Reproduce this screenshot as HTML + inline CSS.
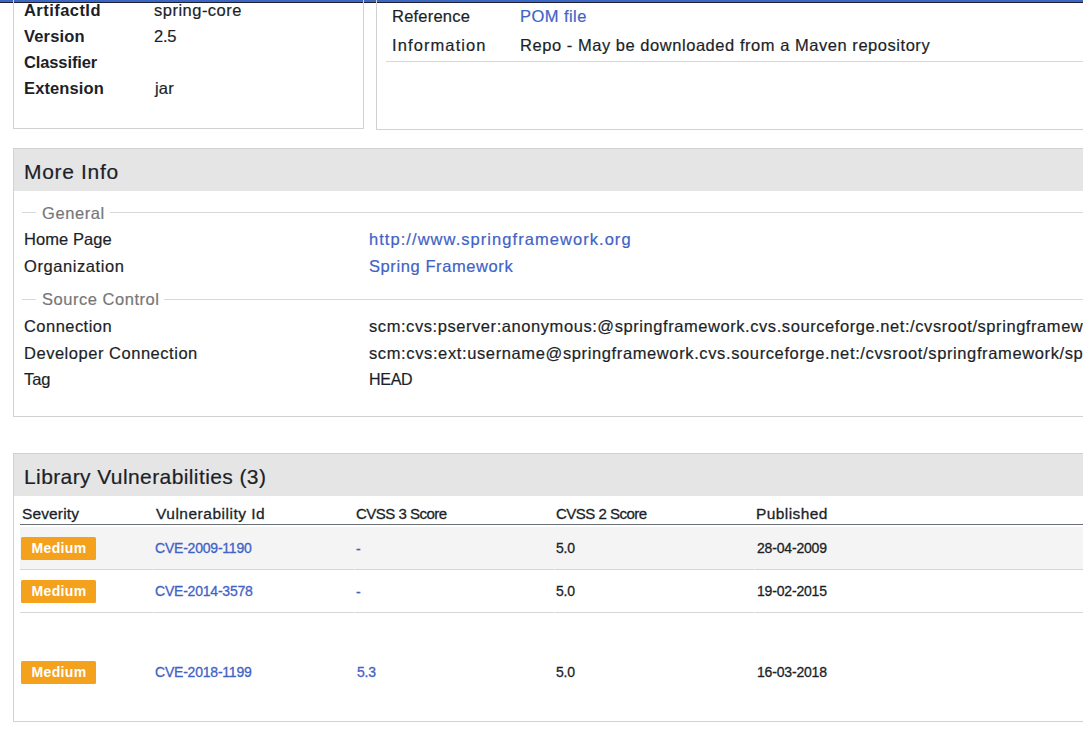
<!DOCTYPE html>
<html><head><meta charset="utf-8">
<style>
html,body{margin:0;padding:0;background:#fff;width:1083px;height:733px;overflow:hidden;position:relative}
body{font-family:"Liberation Sans",sans-serif;color:#1c1f29;}
.a{position:absolute;white-space:nowrap;line-height:20px;font-size:16.5px;-webkit-text-stroke:0.2px #1c1f29}
.b{font-weight:bold;-webkit-text-stroke:0}
.lnk{color:#4262c6;-webkit-text-stroke:0.2px #4262c6}
.box{position:absolute;border:1px solid #d2d2d2;box-sizing:border-box}
.hline{position:absolute;height:1px;background:#d8d8d8}
.hdr{position:absolute;background:#e5e5e5}
.h20{font-size:21px}
.h15{font-size:15.5px;-webkit-text-stroke:0.3px #1c1f29}
.c14{font-size:14px;-webkit-text-stroke:0.3px #1c1f29}
.c14.lnk{-webkit-text-stroke:0.3px #4262c6}
.badge{position:absolute;left:21px;width:75px;height:23px;background:#f4a21e;border-radius:1.5px;color:#fff;font-weight:bold;font-size:14px;line-height:23px;text-align:center;letter-spacing:0.35px;box-sizing:border-box;padding-left:1px}
.gray{color:#777;-webkit-text-stroke:0.2px #777}
</style></head>
<body>
<div style="position:absolute;left:0;top:0;width:1083px;height:2px;background:#3b66c4"></div>
<div style="position:absolute;left:0;top:2px;width:1083px;height:1px;background:#1c2030"></div>
<div class="box" style="left:13px;top:-20px;width:351px;height:149px"></div>
<div id="artifact" class="a b" style="left:24px;top:0px;letter-spacing:0.451px">ArtifactId</div>
<div id="version" class="a b" style="left:24px;top:26px;letter-spacing:0.167px">Version</div>
<div id="classifier" class="a b" style="left:24px;top:52px;letter-spacing:-0.120px">Classifier</div>
<div id="extension" class="a b" style="left:24px;top:78px;letter-spacing:0.125px">Extension</div>
<div id="springcore" class="a" style="left:154px;top:0px;letter-spacing:0.490px">spring-core</div>
<div id="v25" class="a" style="left:154px;top:26px;letter-spacing:-0.300px">2.5</div>
<div id="jar" class="a" style="left:155px;top:78px;letter-spacing:0.200px">jar</div>
<div class="box" style="left:376px;top:-20px;width:800px;height:150px"></div>
<div id="reference" class="a" style="left:392px;top:6px;letter-spacing:0.220px">Reference</div>
<div id="pom" class="a lnk" style="left:520px;top:6px;letter-spacing:0.441px">POM file</div>
<div id="information" class="a" style="left:392px;top:35px;letter-spacing:1.100px">Information</div>
<div id="repo" class="a" style="left:520px;top:35px;letter-spacing:0.540px">Repo - May be downloaded from a Maven repository</div>
<div class="hline" style="left:386px;top:61px;width:700px"></div>
<div class="box" style="left:13px;top:148px;width:1100px;height:269px"></div>
<div class="hdr" style="left:14px;top:149px;width:1100px;height:42px"></div>
<div id="moreinfo" class="a h20" style="left:24px;top:162px;letter-spacing:0.675px">More Info</div>
<div class="hline" style="left:22px;top:212px;width:14px"></div>
<div id="general" class="a gray" style="left:42px;top:203px;letter-spacing:0.583px">General</div>
<div class="hline" style="left:110px;top:212px;width:1000px"></div>
<div id="homepage" class="a" style="left:24px;top:229px;letter-spacing:0.075px">Home Page</div>
<div id="http" class="a lnk" style="left:369px;top:229px;letter-spacing:1.052px">http://www.springframework.org</div>
<div id="organization" class="a" style="left:24px;top:256px;letter-spacing:0.573px">Organization</div>
<div id="springfw" class="a lnk" style="left:369px;top:256px;letter-spacing:0.590px">Spring Framework</div>
<div class="hline" style="left:22px;top:299px;width:14px"></div>
<div id="sourcecontrol" class="a gray" style="left:42px;top:289px;letter-spacing:0.530px">Source Control</div>
<div class="hline" style="left:164px;top:299px;width:1000px"></div>
<div id="connection" class="a" style="left:24px;top:316px;letter-spacing:0.453px">Connection</div>
<div id="scm1" class="a" style="left:369px;top:316px;letter-spacing:0.565px">scm:cvs:pserver:anonymous:@springframework.cvs.sourceforge.net:/cvsroot/springframework/spring</div>
<div id="devconn" class="a" style="left:24px;top:343px;letter-spacing:0.526px">Developer Connection</div>
<div id="scm2" class="a" style="left:369px;top:343px;letter-spacing:0.620px">scm:cvs:ext:username@springframework.cvs.sourceforge.net:/cvsroot/springframework/spring</div>
<div id="tag" class="a" style="left:24px;top:369px;letter-spacing:-0.100px">Tag</div>
<div id="head" class="a" style="left:369px;top:370px;letter-spacing:-0.300px;font-size:16px">HEAD</div>
<div class="box" style="left:13px;top:453px;width:1100px;height:269px"></div>
<div class="hdr" style="left:14px;top:454px;width:1100px;height:42px"></div>
<div id="libvuln" class="a h20" style="left:24px;top:467px;letter-spacing:0.400px">Library Vulnerabilities (3)</div>
<div id="severity" class="a h15" style="left:22px;top:504px;letter-spacing:0.129px">Severity</div>
<div id="vulnid" class="a h15" style="left:156px;top:504px;letter-spacing:0.510px">Vulnerability Id</div>
<div id="cvss3" class="a h15" style="left:356px;top:504px;letter-spacing:-0.500px;font-size:15px">CVSS 3 Score</div>
<div id="cvss2" class="a h15" style="left:556px;top:504px;letter-spacing:-0.500px;font-size:15px">CVSS 2 Score</div>
<div id="published" class="a h15" style="left:756px;top:504px;letter-spacing:0.425px">Published</div>
<div style="position:absolute;left:20px;top:524px;width:1080px;height:1px;background:#6a6e75"></div>
<div style="position:absolute;left:20px;top:527px;width:1080px;height:42px;background:#f4f4f4"></div>
<div class="hline" style="left:20px;top:569px;width:1080px;background:#d6d6d6"></div>
<div class="hline" style="left:20px;top:612px;width:1080px;background:#d6d6d6"></div>
<div style="position:absolute;left:153px;top:569px;width:1px;height:1px;background:#ececec"></div><div style="position:absolute;left:153px;top:612px;width:1px;height:1px;background:#ececec"></div><div style="position:absolute;left:354px;top:569px;width:1px;height:1px;background:#ececec"></div><div style="position:absolute;left:354px;top:612px;width:1px;height:1px;background:#ececec"></div><div style="position:absolute;left:554px;top:569px;width:1px;height:1px;background:#ececec"></div><div style="position:absolute;left:554px;top:612px;width:1px;height:1px;background:#ececec"></div><div style="position:absolute;left:754px;top:569px;width:1px;height:1px;background:#ececec"></div><div style="position:absolute;left:754px;top:612px;width:1px;height:1px;background:#ececec"></div>
<div class="badge" style="top:537px">Medium</div>
<div id="cve1" class="a c14 lnk" style="left:155px;top:538px;letter-spacing:-0.213px">CVE-2009-1190</div>
<div id="dash1" class="a c14 lnk" style="left:356px;top:539px;letter-spacing:0.000px">-</div>
<div id="s2a" class="a c14" style="left:556px;top:538px;letter-spacing:-0.200px">5.0</div>
<div id="date1" class="a c14" style="left:757px;top:538px;letter-spacing:-0.182px">28-04-2009</div>
<div class="badge" style="top:580px">Medium</div>
<div id="cve2" class="a c14 lnk" style="left:155px;top:581px;letter-spacing:-0.213px">CVE-2014-3578</div>
<div id="dash2" class="a c14 lnk" style="left:356px;top:582px;letter-spacing:0.000px">-</div>
<div id="s2b" class="a c14" style="left:556px;top:581px;letter-spacing:-0.200px">5.0</div>
<div id="date2" class="a c14" style="left:757px;top:581px;letter-spacing:-0.182px">19-02-2015</div>
<div class="badge" style="top:661px">Medium</div>
<div id="cve3" class="a c14 lnk" style="left:155px;top:662px;letter-spacing:-0.213px">CVE-2018-1199</div>
<div id="s3c" class="a c14 lnk" style="left:357px;top:662px;letter-spacing:-0.200px">5.3</div>
<div id="s2c" class="a c14" style="left:556px;top:662px;letter-spacing:-0.200px">5.0</div>
<div id="date3" class="a c14" style="left:757px;top:662px;letter-spacing:-0.182px">16-03-2018</div>
</body></html>
